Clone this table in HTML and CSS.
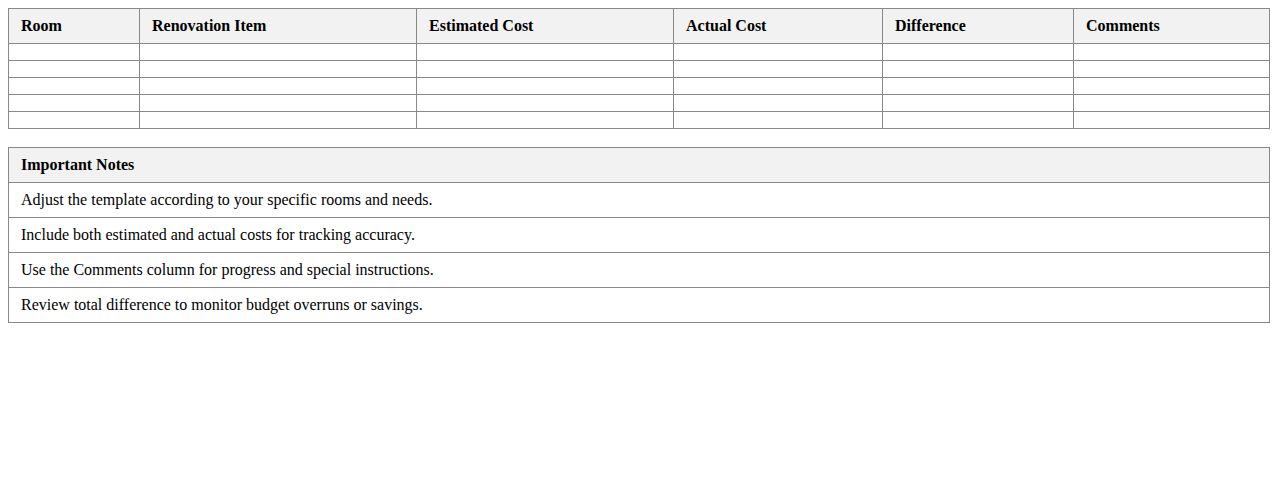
FILE: index.html
```html
<!DOCTYPE html>
<html>
<head>
<meta charset="utf-8">
<link rel="stylesheet" href="styles.css">
</head>
<body>
<table class="grid">
  <thead>
    <tr>
      <th class="c-room">Room</th>
      <th class="c-item">Renovation Item</th>
      <th class="c-est">Estimated Cost</th>
      <th class="c-act">Actual Cost</th>
      <th class="c-diff">Difference</th>
      <th class="c-comm">Comments</th>
    </tr>
  </thead>
  <tbody>
    <tr><td></td><td></td><td></td><td></td><td></td><td></td></tr>
    <tr><td></td><td></td><td></td><td></td><td></td><td></td></tr>
    <tr><td></td><td></td><td></td><td></td><td></td><td></td></tr>
    <tr><td></td><td></td><td></td><td></td><td></td><td></td></tr>
    <tr><td></td><td></td><td></td><td></td><td></td><td></td></tr>
  </tbody>
</table>
<table class="grid notes">
  <thead>
    <tr><th>Important Notes</th></tr>
  </thead>
  <tbody>
    <tr><td>Adjust the template according to your specific rooms and needs.</td></tr>
    <tr><td>Include both estimated and actual costs for tracking accuracy.</td></tr>
    <tr><td>Use the Comments column for progress and special instructions.</td></tr>
    <tr><td>Review total difference to monitor budget overruns or savings.</td></tr>
  </tbody>
</table>
</body>
</html>
```
FILE: styles.css
```css
body {
  margin: 8px;
  font-family: "Liberation Serif", "Times New Roman", serif;
  font-size: 16px;
  color: #000;
  background: #fff;
}
.grid {
  width: 100%;
  border-collapse: collapse;
  table-layout: fixed;
}
.grid th, .grid td {
  border: 1px solid #888;
  padding: 8px 12px;
  text-align: left;
}
.grid th {
  background: #f2f2f2;
  font-weight: bold;
}
.c-room { width: 106px; }
.c-item { width: 252px; }
.c-est { width: 232px; }
.c-act { width: 184px; }
.c-diff { width: 166px; }
.c-comm { width: auto; }
.notes {
  margin-top: 18px;
}
```
